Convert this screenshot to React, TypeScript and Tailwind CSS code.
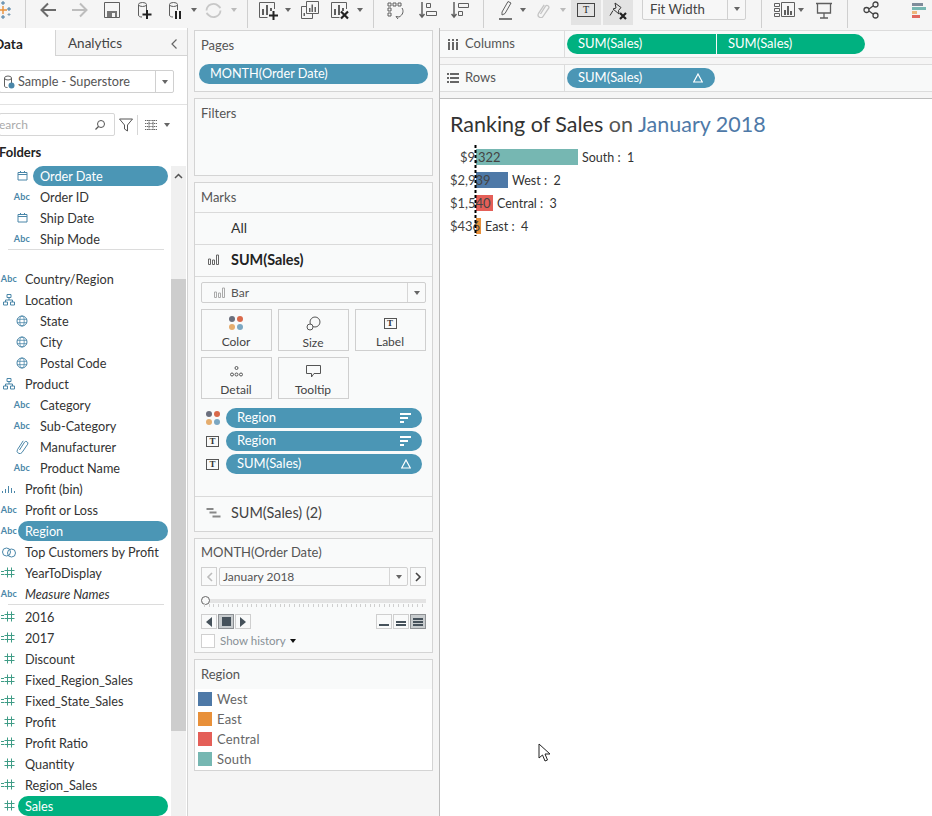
import React from "react";

const font = { fontFamily: '"Lato", "Open Sans", sans-serif' };

function Svg({ w = 24, h = 24, children, className = "" }: { w?: number; h?: number; children: React.ReactNode; className?: string }) {
  return (
    <svg width={w} height={h} viewBox={`0 0 ${w} ${h}`} fill="none" className={`shrink-0 ${className}`}>
      {children}
    </svg>
  );
}

function Caret({ c = "#666", s = 3 }: { c?: string; s?: number }) {
  return <div className="w-0 h-0" style={{ borderLeft: `${s}px solid transparent`, borderRight: `${s}px solid transparent`, borderTop: `${s + 1}px solid ${c}` }} />;
}

function Sep() {
  return <div className="w-px h-[28px] bg-[#cfcfcf] self-start" />;
}

const D = "#5f5f5f";
const CLIP = "M3.500 11 8.500 3.200a1.900 1.900 0 0 1 3.200 2L6 13.500a2.700 2.700 0 0 1-4.600-2.800L7.200 1.800";

type Tool = { x: number; w: number; node: React.ReactNode };

const tools: Tool[] = [
  {
    x: -3, w: 14,
    node: (
      <Svg w={14} h={20}>
        <path d="M6 6v8M2 10h8" stroke="#e8903a" strokeWidth="1.400" />
        <path d="M6 1v4M4 3h4M12 7v4M10 9h4M6 15v4M4 17h4" stroke="#44799f" strokeWidth="1" />
        <path d="M12 13v3M10.500 14.500h3" stroke="#7f9fb5" />
      </Svg>
    ),
  },
  { x: 25, w: 1, node: <Sep /> },
  { x: 40, w: 16, node: <Svg w={16} h={16}><path d="M8 1.500 1.500 8 8 14.500M1.500 8H16" stroke="#6b6b6b" strokeWidth="2" /></Svg> },
  { x: 72, w: 16, node: <Svg w={16} h={16}><path d="M8 1.500 14.500 8 8 14.500M14.500 8H0" stroke="#bdbdbd" strokeWidth="2" /></Svg> },
  { x: 104, w: 16, node: <Svg w={16} h={16}><path d="M.5.500h15v15H.5z" stroke={D} /><path d="M3 15V9h10v6z" fill="#777" /><path d="M8 11h3v4H8z" fill="#f5f5f5" /></Svg> },
  {
    x: 137, w: 15,
    node: (
      <Svg w={15} h={19}>
        <ellipse cx="5.500" cy="3.500" rx="4" ry="2" stroke={D} />
        <path d="M1.500 4v10c0 1.500 1.500 2 3.500 2M9.500 4v5" stroke={D} />
        <path d="M10 9v9M5.500 13.500h9" stroke="#222" strokeWidth="2" />
      </Svg>
    ),
  },
  {
    x: 168, w: 14,
    node: (
      <Svg w={14} h={19}>
        <ellipse cx="5.500" cy="3.500" rx="4" ry="2" stroke={D} />
        <path d="M1.500 4v10c0 1.500 1.500 2 3.500 2M9.500 4v5" stroke={D} />
        <path d="M7 10h2v8H7zM11 10h2v8h-2z" fill="#222" />
      </Svg>
    ),
  },
  { x: 191, w: 6, node: <Caret /> },
  { x: 205, w: 17, node: <Svg w={17} h={17}><path d="M1.500 8.500a7 7 0 0 1 12-4.500l2 2M15.500 8.500a7 7 0 0 1-12 4.500l-2-2" stroke="#c8c8c8" strokeWidth="1.800" /></Svg> },
  { x: 231, w: 6, node: <Caret c="#bbb" /> },
  { x: 247, w: 1, node: <Sep /> },
  {
    x: 259, w: 20,
    node: (
      <Svg w={20} h={19}>
        <path d="M15.500 8V1.500H.5v15h8" stroke={D} />
        <path d="M3 8h2v6H3zM7 4h2v10H7zM11 7h2v3h-2z" fill={D} />
        <path d="M14.500 10v9M10 14.500h9" stroke="#222" strokeWidth="2" />
      </Svg>
    ),
  },
  { x: 285, w: 6, node: <Caret /> },
  {
    x: 301, w: 18,
    node: (
      <Svg w={18} h={18}>
        <path d="M5.500 5.500h-5v12h11v-5" stroke={D} />
        <path d="M5.500.5h12v12h-12z" stroke={D} />
        <path d="M8 7h1.500v4H8zM10.500 3.500H12V11h-1.500zM13.500 6H15v5h-1.500zM2.500 12H4v3H2.500z" fill={D} />
      </Svg>
    ),
  },
  {
    x: 331, w: 19,
    node: (
      <Svg w={19} h={19}>
        <path d="M15.500 8V1.500H.5v15h8" stroke={D} />
        <path d="M3 8h2v6H3zM7 4h2v10H7zM11 7h2v3h-2z" fill={D} />
        <path d="M10 10.500l7 7M17 10.500l-7 7" stroke="#222" strokeWidth="2.200" />
      </Svg>
    ),
  },
  { x: 357, w: 6, node: <Caret /> },
  { x: 373, w: 1, node: <Sep /> },
  {
    x: 387, w: 17,
    node: (
      <Svg w={17} h={18}>
        <path d="M1 2h3v3H1zM6 2h3v3H6zM11 2h3v3h-3zM1 7h3v3H1zM1 12h3v3H1z" stroke={D} />
        <path d="M15 7c2 3 1 7-3 9l-3-.5M11 18l-2-2.500" stroke={D} />
      </Svg>
    ),
  },
  {
    x: 419, w: 18,
    node: (
      <Svg w={18} h={18}>
        <path d="M3 1v15M.5 13 3 16l2.500-3" stroke={D} strokeWidth="1.500" />
        <path d="M7.500 2.500h4v4h-4zM7.500 10.500h10v4h-10z" stroke={D} />
      </Svg>
    ),
  },
  {
    x: 451, w: 18,
    node: (
      <Svg w={18} h={18}>
        <path d="M3 1v15M.5 13 3 16l2.500-3" stroke={D} strokeWidth="1.500" />
        <path d="M7.500 2.500h10v4h-10zM7.500 10.500h4v4h-4z" stroke={D} />
      </Svg>
    ),
  },
  { x: 483, w: 1, node: <Sep /> },
  {
    x: 499, w: 13,
    node: (
      <Svg w={13} h={20}>
        <path d="M3 12 9 1.500l3 1.500-6 10.500-3 1.500z" stroke={D} />
        <path d="M0 19h13" stroke="#777" strokeWidth="2" />
      </Svg>
    ),
  },
  { x: 520, w: 6, node: <Caret /> },
  {
    x: 537, w: 13,
    node: (
      <Svg w={13} h={15}>
        <path d={CLIP} stroke="#c4c4c4" strokeWidth="1.300" />
      </Svg>
    ),
  },
  { x: 560, w: 6, node: <Caret c="#bbb" /> },
  {
    x: 571, w: 30,
    node: (
      <div className="w-[30px] h-[25px] self-start pb-[5px] bg-[#e3e3e3] flex items-center justify-center">
        <div className="w-[18px] h-[14px] border border-[#444] flex items-center justify-center text-[10px] text-[#222] leading-none" style={{ fontFamily: '"Liberation Serif", serif' }}>T</div>
      </div>
    ),
  },
  {
    x: 603, w: 30,
    node: (
      <div className="w-[30px] h-[25px] self-start pb-[3px] bg-[#e3e3e3] flex items-center justify-center">
        <Svg w={19} h={19}>
          <path d="M6 1l6 4.500-2.500 3 .5 3.500-6-5 3-1zM4 8.500l-3 5" stroke="#333" />
          <path d="M11 11l6 6M17 11l-6 6" stroke="#222" strokeWidth="2.200" />
        </Svg>
      </div>
    ),
  },
  {
    x: 642, w: 104,
    node: (
      <div className="w-[104px] h-[22px] self-start -mt-[2px] border border-[#d0d0d0] rounded-[2px] flex items-center pl-[7px] text-[13.200px] text-[#444] bg-[#f7f7f7]">
        <span className="flex-1 pt-[2px]">Fit Width</span>
        <div className="w-[18px] h-full border-l border-[#d0d0d0] flex items-center justify-center"><Caret /></div>
      </div>
    ),
  },
  { x: 761, w: 1, node: <Sep /> },
  {
    x: 774, w: 21,
    node: (
      <Svg w={21} h={16}>
        <path d="M.5 1.500h5v3h-5zM.5 6.500h5v3h-5zM.5 11.500h5v3h-5z" stroke={D} />
        <path d="M7.500.5h13v14h-13z" stroke={D} />
        <path d="M10 8h2v5h-2zM13 4h2v9h-2zM16 9h2v4h-2z" fill={D} />
      </Svg>
    ),
  },
  { x: 798, w: 6, node: <Caret /> },
  {
    x: 815, w: 18,
    node: (
      <Svg w={18} h={18}>
        <path d="M1 2.500h16M2.500 3v9h13V3M9 12v5M5 17h8" stroke={D} strokeWidth="1.300" />
      </Svg>
    ),
  },
  { x: 847, w: 1, node: <Sep /> },
  {
    x: 863, w: 16,
    node: (
      <Svg w={16} h={18}>
        <circle cx="3.500" cy="9" r="2.500" stroke="#444" strokeWidth="1.300" />
        <circle cx="12.500" cy="3.500" r="2.500" stroke="#444" strokeWidth="1.300" />
        <circle cx="12.500" cy="14.500" r="2.500" stroke="#444" strokeWidth="1.300" />
        <path d="M6 8l4-3M6 10l4 3" stroke="#444" strokeWidth="1.300" />
      </Svg>
    ),
  },
  {
    x: 912, w: 14,
    node: (
      <div className="w-[14px] flex flex-col gap-px">
        <div className="h-[3px] w-[11px] bg-[#7f8c9a]" />
        <div className="h-[3px] w-[14px] bg-[#76b7b2]" />
        <div className="h-[3px] w-[5px] bg-[#edb77d]" />
        <div className="h-[3px] w-[8px] bg-[#e1675f]" />
      </div>
    ),
  },
];

function Toolbar() {
  let edge = 0;
  return (
    <div className="h-[28px] bg-[#f5f5f5] shrink-0 text-[#555] overflow-hidden">
      <div className="h-[20px] flex items-center">
        {tools.map((t) => {
          const ml = t.x - edge;
          edge = t.x + t.w;
          return (
            <div key={t.x} className="shrink-0 h-full flex items-center justify-center" style={{ marginLeft: ml, width: t.w }}>
              {t.node}
            </div>
          );
        })}
      </div>
    </div>
  );
}

const dimIcon = "#4a86a8";
const meaIcon = "#3f9c86";

function AbcIcon({ c = dimIcon }: { c?: string }) {
  return <span className="text-[9px] font-bold leading-none tracking-[0.2px]" style={{ color: c }}>Abc</span>;
}

function CalIcon() {
  return (
    <Svg w={11} h={11}>
      <path d="M1 2.500h9v7.500H1zM1 4.500h9M3.500 1v2M7.500 1v2" stroke={dimIcon} />
    </Svg>
  );
}

function GlobeIcon() {
  return (
    <Svg w={12} h={12}>
      <circle cx="6" cy="6" r="5" stroke={dimIcon} />
      <ellipse cx="6" cy="6" rx="2.200" ry="5" stroke={dimIcon} strokeWidth=".8" />
      <path d="M1 4.300h10M1 7.700h10" stroke={dimIcon} strokeWidth=".8" />
    </Svg>
  );
}

function TreeIcon() {
  return (
    <Svg w={12} h={12}>
      <path d="M4 .5h4v3H4zM.5 8h4v3h-4zM7.500 8h4v3h-4zM6 3.500V6M2.500 8V6h7v2" stroke={dimIcon} />
    </Svg>
  );
}

function ClipIcon() {
  return (
    <Svg w={13} h={15}>
      <path d={CLIP} stroke={dimIcon} />
    </Svg>
  );
}

function BinIcon() {
  return (
    <Svg w={14} h={9}>
      <path d="M.5 7v2M3.500 5v4M6.500 2v7M9.500 4v5M12.500 7v2" stroke={dimIcon} />
    </Svg>
  );
}

function SetIcon() {
  return (
    <Svg w={14} h={12}>
      <circle cx="4.500" cy="6" r="4" stroke={dimIcon} />
      <circle cx="9.500" cy="7" r="4" stroke={dimIcon} />
    </Svg>
  );
}

function HashIcon({ eq = false }: { eq?: boolean }) {
  return (
    <div className="flex items-center">
      {eq && <span className="block w-[3px] h-[4px] border-y border-[#3f9c86] -ml-[3px]" />}
      <Svg w={11} h={11}>
        <path d="M3.500.5v10M7.500.5v10M.5 3.500h10M.5 7.500h10" stroke={meaIcon} />
      </Svg>
    </div>
  );
}

type Row = { t: string; icon: React.ReactNode; nest?: boolean; pill?: string; italic?: boolean; rule?: boolean; gap?: number };

const rows: Row[] = [
  { t: "Order Date", icon: <CalIcon />, nest: true, pill: "#4b96b5" },
  { t: "Order ID", icon: <AbcIcon />, nest: true },
  { t: "Ship Date", icon: <CalIcon />, nest: true },
  { t: "Ship Mode", icon: <AbcIcon />, nest: true, rule: true },
  { t: "Country/Region", icon: <AbcIcon />, gap: 18 },
  { t: "Location", icon: <TreeIcon /> },
  { t: "State", icon: <GlobeIcon />, nest: true },
  { t: "City", icon: <GlobeIcon />, nest: true },
  { t: "Postal Code", icon: <GlobeIcon />, nest: true },
  { t: "Product", icon: <TreeIcon /> },
  { t: "Category", icon: <AbcIcon />, nest: true },
  { t: "Sub-Category", icon: <AbcIcon />, nest: true },
  { t: "Manufacturer", icon: <ClipIcon />, nest: true },
  { t: "Product Name", icon: <AbcIcon />, nest: true },
  { t: "Profit (bin)", icon: <BinIcon /> },
  { t: "Profit or Loss", icon: <AbcIcon /> },
  { t: "Region", icon: <AbcIcon />, pill: "#4b96b5" },
  { t: "Top Customers by Profit", icon: <SetIcon /> },
  { t: "YearToDisplay", icon: <HashIcon eq /> },
  { t: "Measure Names", icon: <AbcIcon />, italic: true, rule: true },
  { t: "2016", icon: <HashIcon eq />, gap: 1 },
  { t: "2017", icon: <HashIcon eq /> },
  { t: "Discount", icon: <HashIcon /> },
  { t: "Fixed_Region_Sales", icon: <HashIcon eq /> },
  { t: "Fixed_State_Sales", icon: <HashIcon eq /> },
  { t: "Profit", icon: <HashIcon /> },
  { t: "Profit Ratio", icon: <HashIcon eq /> },
  { t: "Quantity", icon: <HashIcon /> },
  { t: "Region_Sales", icon: <HashIcon eq /> },
  { t: "Sales", icon: <HashIcon />, pill: "#00b180" },
];

function FieldRow({ r }: { r: Row }) {
  return (
    <>
      <div className="h-[21px] flex items-center shrink-0 w-[168px]" style={{ marginTop: r.gap ?? 0 }}>
        <div className={`flex items-center justify-center shrink-0 ${r.nest ? "w-[33px] pl-[11px]" : "w-[18px]"}`}>{r.icon}</div>
        <div
          className={`flex-1 h-[20px] flex items-center pl-[7px] pt-[2px] rounded-full text-[12.700px] ${r.italic ? "italic" : ""} ${r.pill ? "text-white" : "text-[#333]"}`}
          style={r.pill ? { backgroundColor: r.pill } : undefined}
        >
          {r.t}
        </div>
      </div>
      {r.rule && <div className="h-px bg-[#dcdcdc] ml-[8px] w-[156px] shrink-0" />}
    </>
  );
}

function Sidebar() {
  return (
    <div className="w-[188px] shrink-0 bg-white flex flex-col border-r border-[#d4d4d4] overflow-hidden">
      <div className="h-[26px] mt-[2px] flex shrink-0 text-[13.500px]">
        <div className="w-[61px] font-bold text-[#222] flex items-center -ml-[6px] pt-[2px] shrink-0"><span>Data</span></div>
        <div className="flex-1 bg-[#f5f5f5] border-l border-b border-[#d4d4d4] flex items-center pl-[12px] pt-[2px] text-[#444] justify-between pr-[9px]">
          <span>Analytics</span>
          <Svg w={8} h={12}><path d="M6.500 1.500 2 6l4.500 4.500" stroke="#666" strokeWidth="1.200" /></Svg>
        </div>
      </div>
      <div className="h-[49px] border-b border-[#e2e2e2] flex items-center shrink-0 pt-[3px]">
        <div className="w-[175px] h-[23px] border border-[#d0d0d0] rounded-[2px] flex items-center -ml-px shrink-0">
          <div className="w-[18px] flex justify-center">
            <Svg w={12} h={14}>
              <ellipse cx="5" cy="3" rx="3.500" ry="2" stroke={D} />
              <path d="M1.500 3v8c0 1 1 1.500 3 1.500M8.500 3v5" stroke={D} />
              <circle cx="8.500" cy="10.500" r="3" fill="#4a86a8" />
            </Svg>
          </div>
          <span className="flex-1 text-[12.700px] text-[#555]">Sample - Superstore</span>
          <div className="w-[18px] h-full border-l border-[#d0d0d0] flex items-center justify-center"><Caret /></div>
        </div>
      </div>
      <div className="h-[23px] mt-[8px] flex items-center shrink-0">
        <div className="w-[116px] h-[23px] border border-[#d6d6d6] rounded-[2px] flex items-center justify-between pr-[8px] text-[12px] text-[#aaa] -ml-[1px] overflow-hidden shrink-0">
          <span className="-ml-[1px]">earch</span>
          <Svg w={12} h={12}><circle cx="7" cy="5" r="3.500" stroke="#555" /><path d="M4.500 7.500 1.500 10.500" stroke="#555" strokeWidth="1.300" /></Svg>
        </div>
        <div className="w-[22px] flex justify-center">
          <Svg w={14} h={14}><path d="M.5 1h13L8.500 7v6l-3-2V7z" stroke="#555" /></Svg>
        </div>
        <div className="w-px h-[20px] bg-[#d6d6d6]" />
        <div className="w-[26px] flex justify-center">
          <Svg w={12} h={10}><path d="M0 .5h12M0 3.500h12M0 6.500h12M0 9.500h12M4 0v10M8 0v10" stroke="#666" strokeDasharray="1.200 .6" /></Svg>
        </div>
        <Caret />
      </div>
      <div className="h-[19px] mt-[7px] text-[13px] font-bold text-[#222] flex items-center -ml-[1px] shrink-0">Folders</div>
      <div className="flex-1 flex min-h-0">
        <div className="w-[171px] pt-[3px] flex flex-col shrink-0 overflow-hidden">
          {rows.map((r) => (
            <FieldRow key={r.t} r={r} />
          ))}
        </div>
        <div className="w-[15px] mt-[4px] shrink-0 bg-[#f0f0f0] flex flex-col">
          <div className="h-[113px] flex justify-center pt-[7px]">
            <Svg w={9} h={6}><path d="M1 5l3.500-3.500L8 5" stroke="#555" strokeWidth="1.500" /></Svg>
          </div>
          <div className="h-[452px] bg-[#cdcdcd]" />
        </div>
      </div>
    </div>
  );
}

function Card({ title, className = "", children }: { title?: string; className?: string; children?: React.ReactNode }) {
  return (
    <div className={`border border-[#d4d4d4] bg-[#f9fafa] shrink-0 ${className}`}>
      {title && <div className="h-[30px] pl-[6px] flex items-center text-[13px] text-[#555]">{title}</div>}
      {children}
    </div>
  );
}

function Pill({ t, w, color = "#4b96b5", right, size = "text-[13px]", round = "rounded-full" }: { t: string; w?: number | string; color?: string; right?: React.ReactNode; size?: string; round?: string }) {
  return (
    <div className={`h-[20px] flex items-center justify-between pl-[11px] pr-[11px] text-white shrink-0 ${round} ${size}`} style={{ backgroundColor: color, width: w }}>
      <span>{t}</span>
      {right}
    </div>
  );
}

function SortIcon() {
  return (
    <div className="flex flex-col gap-[2px]">
      <div className="w-[11px] h-[2px] bg-white" />
      <div className="w-[8px] h-[2px] bg-white" />
      <div className="w-[4px] h-[2px] bg-white" />
    </div>
  );
}

function Delta() {
  return <Svg w={10} h={10}><path d="M5 1 9.300 9H.7z" stroke="#fff" strokeWidth="1.200" /></Svg>;
}

function BarMini({ c = "#666" }: { c?: string }) {
  return (
    <Svg w={12} h={11}>
      <path d="M.5 5h2v5.500h-2zM4.500 6h2v4.500h-2zM8.500 1h2v9.500h-2z" stroke={c} />
    </Svg>
  );
}

function DotsFour() {
  const s = "w-[6px] h-[6px] rounded-full";
  return (
    <div className="grid grid-cols-2 gap-[2px]">
      <div className={`${s} bg-[#6b6f7d]`} />
      <div className={`${s} bg-[#d9694a]`} />
      <div className={`${s} bg-[#e5ad6e]`} />
      <div className={`${s} bg-[#7ba7c2]`} />
    </div>
  );
}

function TBox() {
  return (
    <div className="w-[13px] h-[11px] border border-[#555] flex items-center justify-center text-[9px] font-bold text-[#333] leading-none" style={{ fontFamily: '"Liberation Serif", serif' }}>T</div>
  );
}

function MarkBtn({ label, icon }: { label: string; icon: React.ReactNode }) {
  return (
    <div className="h-[42px] border border-[#cfcfcf] bg-[#f9fafa] flex flex-col items-center pt-[6px] pr-[1px] text-[12px] text-[#444]">
      <div className="h-[15px] flex items-center justify-center">{icon}</div>
      <div className="leading-[17px] mt-[3px]">{label}</div>
    </div>
  );
}

function MarkPillRow({ icon, t, right }: { icon: React.ReactNode; t: string; right: React.ReactNode }) {
  return (
    <div className="flex items-center h-[20px] mb-[3px]">
      <div className="w-[25px] flex justify-center shrink-0 pr-[2px]">{icon}</div>
      <Pill t={t} w={196} right={right} />
    </div>
  );
}

function Marks() {
  return (
    <Card className="mt-[6px] h-[350px]">
      <div className="h-[30px] pl-[6px] flex items-center text-[13px] text-[#555] border-b border-[#dadada]">Marks</div>
      <div className="h-[32px] pl-[36px] pb-[2px] flex items-center text-[14px] text-[#333] border-b border-[#dadada]">All</div>
      <div className="h-[32px] pb-[2px] flex items-center text-[14.400px] font-bold text-[#222] border-b border-[#dadada]">
        <div className="w-[36px] flex justify-center pl-[2px]"><BarMini /></div>
        SUM(Sales)
      </div>
      <div className="px-[6px] pt-[5px]">
        <div className="h-[21px] border border-[#cfcfcf] rounded-[2px] flex items-center text-[12px] text-[#555]">
          <div className="w-[29px] flex justify-end pr-[5px]"><BarMini c="#aaa" /></div>
          <span className="flex-1">Bar</span>
          <div className="w-[18px] h-full border-l border-[#d6d6d6] flex items-center justify-center"><Caret /></div>
        </div>
        <div className="grid grid-cols-3 gap-[6px] mt-[6px]">
          <MarkBtn label="Color" icon={<DotsFour />} />
          <MarkBtn
            label="Size"
            icon={
              <Svg w={15} h={15}>
                <circle cx="9" cy="6" r="5" stroke="#555" />
                <circle cx="4" cy="11" r="3" stroke="#555" fill="#f9fafa" />
              </Svg>
            }
          />
          <MarkBtn label="Label" icon={<TBox />} />
          <MarkBtn
            label="Detail"
            icon={
              <Svg w={13} h={11}>
                <circle cx="6.500" cy="2" r="1.500" stroke="#555" />
                <circle cx="2" cy="8.500" r="1.500" stroke="#555" />
                <circle cx="6.500" cy="8.500" r="1.500" stroke="#555" />
                <circle cx="11" cy="8.500" r="1.500" stroke="#555" />
              </Svg>
            }
          />
          <MarkBtn
            label="Tooltip"
            icon={
              <Svg w={15} h={13}>
                <path d="M.5.5h14v8H8l-2.500 3.500V8.500h-5z" stroke="#555" />
              </Svg>
            }
          />
        </div>
      </div>
      <div className="px-[6px] mt-[9px]">
        <MarkPillRow icon={<DotsFour />} t="Region" right={<SortIcon />} />
        <MarkPillRow icon={<TBox />} t="Region" right={<SortIcon />} />
        <MarkPillRow icon={<TBox />} t="SUM(Sales)" right={<Delta />} />
      </div>
      <div className="mt-[22px] h-[32px] pt-[1px] border-t border-[#dadada] flex items-center text-[14.400px] text-[#444]">
        <div className="w-[36px] flex justify-center pl-[1px]">
          <Svg w={16} h={12}>
            <path d="M.5 2h7M3.500 5.500h7M6.500 9.500h8" stroke="#888" strokeWidth="2" />
          </Svg>
        </div>
        SUM(Sales) (2)
      </div>
    </Card>
  );
}

function SmallBtn({ active, children }: { active?: boolean; children: React.ReactNode }) {
  return (
    <div className={`w-[16px] h-[15px] border flex items-center justify-center ${active ? "bg-[#c8ccce] border-[#8e9194]" : "bg-[#f9fafa] border-[#cfcfcf]"}`}>
      {children}
    </div>
  );
}

function PagesControl() {
  const ticks = Array.from({ length: 47 });
  const line = "w-[10px] h-[2px] bg-[#46525b]";
  return (
    <Card className="mt-[6px] h-[115px]">
      <div className="h-[27px] pl-[6px] flex items-center text-[13px] text-[#555]">MONTH(Order Date)</div>
      <div className="px-[6px]">
        <div className="flex items-center h-[19px] gap-[2px] mt-[1px] text-[12px] text-[#555]">
          <div className="w-[16px] h-[19px] border border-[#d0d0d0] flex items-center justify-center">
            <Svg w={7} h={10}><path d="M6 1 2 5l4 4" stroke="#bbb" strokeWidth="1.600" /></Svg>
          </div>
          <div className="flex-1 h-[19px] border border-[#d0d0d0] rounded-[2px] flex items-center pl-[3px]">
            <span className="flex-1">January 2018</span>
            <div className="w-[18px] h-full border-l border-[#d6d6d6] flex items-center justify-center"><Caret /></div>
          </div>
          <div className="w-[16px] h-[19px] border border-[#d0d0d0] flex items-center justify-center">
            <Svg w={7} h={10}><path d="M1 1l4 4-4 4" stroke="#444" strokeWidth="1.600" /></Svg>
          </div>
        </div>
        <div className="relative h-[15px] mt-[10px]">
          <div className="absolute left-0 right-0 top-[3px] h-[4px] bg-[#e4e4e4]" />
          <div className="absolute left-0 top-0 w-[9px] h-[9px] rounded-full border border-[#666] bg-[#f9fafa]" />
          <div className="absolute left-[3px] right-[3px] top-[8px] flex justify-between">
            {ticks.map((_, i) => (
              <div key={i} className="w-px h-[3px] bg-[#cfcfcf]" />
            ))}
          </div>
        </div>
        <div className="flex items-center justify-between mt-[3px]">
          <div className="flex gap-[1px]">
            <SmallBtn><div className="w-0 h-0 border-y-[5px] border-y-transparent border-r-[6px] border-r-[#46525b]" /></SmallBtn>
            <SmallBtn active><div className="w-[9px] h-[9px] bg-[#46525b]" /></SmallBtn>
            <SmallBtn><div className="w-0 h-0 border-y-[5px] border-y-transparent border-l-[6px] border-l-[#46525b]" /></SmallBtn>
          </div>
          <div className="flex gap-[1px]">
            <SmallBtn><div className={`${line} mt-[6px]`} /></SmallBtn>
            <SmallBtn><div className="flex flex-col gap-[1px] mt-[3px]"><div className={line} /><div className={line} /></div></SmallBtn>
            <SmallBtn active><div className="flex flex-col gap-[1px]"><div className={line} /><div className={line} /><div className={line} /></div></SmallBtn>
          </div>
        </div>
        <div className="flex items-center h-[14px] mt-[5px] text-[11.500px] text-[#889096]">
          <div className="w-[14px] h-[14px] border border-[#d0d0d0] bg-white mr-[5px]" />
          Show history
          <div className="ml-[4px]"><Caret c="#111" /></div>
        </div>
      </div>
    </Card>
  );
}

function Legend() {
  const items = [
    ["West", "#4e79a7"],
    ["East", "#e8903a"],
    ["Central", "#e45f58"],
    ["South", "#76b7b2"],
  ];
  return (
    <Card className="mt-[6px] h-[112px] !bg-white">
      <div className="h-[29px] pl-[6px] flex items-center text-[13px] text-[#555] bg-[#f9fafa]">Region</div>
      <div className="flex flex-col">
        {items.map(([t, c]) => (
          <div key={t} className="h-[20px] flex items-center pl-[3px] text-[13px] text-[#666] tracking-[0.2px]">
            <div className="w-[14px] h-[14px] mr-[5px]" style={{ backgroundColor: c }} />
            <span className="pt-[2px]">{t}</span>
          </div>
        ))}
      </div>
    </Card>
  );
}

function MiddleColumn() {
  return (
    <div className="w-[252px] shrink-0 bg-[#f5f5f5] pl-[6px] pt-[2px] border-r border-[#bdbdbd] overflow-hidden">
      <div className="w-[239px]">
        <Card title="Pages" className="h-[62px]">
          <div className="px-[4px] mt-[3px]">
            <Pill t="MONTH(Order Date)" w={229} size="text-[12.700px]" />
          </div>
        </Card>
        <Card title="Filters" className="h-[78px] mt-[6px]" />
        <Marks />
        <PagesControl />
        <Legend />
      </div>
    </div>
  );
}

function Shelf({ label, icon, children }: { label: string; icon: React.ReactNode; children: React.ReactNode }) {
  return (
    <div className="h-[28px] bg-[#f8f9f9] border-y border-[#dcdcdc] flex items-center shrink-0">
      <div className="w-[125px] h-full border-r border-[#dcdcdc] flex items-center text-[13px] text-[#555] shrink-0">
        <div className="w-[25px] flex justify-center pl-[1px]">{icon}</div>
        {label}
      </div>
      <div className="flex pl-[2px]">{children}</div>
    </div>
  );
}

function Chart() {
  const rowsData = [
    { v: "$9,322", x: 460, y: 150, w: 102, c: "#76b7b2", l: "South :  1" },
    { v: "$2,939", x: 450, y: 173, w: 32, c: "#4e79a7", l: "West :  2" },
    { v: "$1,540", x: 450, y: 196, w: 17, c: "#e45f58", l: "Central :  3" },
    { v: "$436", x: 450, y: 219, w: 5, c: "#e8903a", l: "East :  4" },
  ];
  return (
    <div className="flex-1 bg-white border-t border-[#bdbdbd] mt-[6px] min-h-0 relative">
      <div className="pl-[10px] pt-[11px] text-[21.500px] leading-[28px] text-[#333] whitespace-nowrap">
        Ranking of Sales <span className="text-[#555]">on</span> <span className="text-[#4e79a7]">January 2018</span>
      </div>
      <svg width={300} height={110} viewBox="440 140 300 110" className="block mt-[1px]" style={font}>
        {rowsData.map((r) => (
          <g key={r.v}>
            <rect x={476} y={r.y} width={r.w} height={16} fill={r.c} />
            <text x={r.x} y={r.y + 12.500} fontSize="13" fill="#444">{r.v}</text>
            <text x={476 + r.w + 4} y={r.y + 12.500} fontSize="12.500" fill="#333" style={{ whiteSpace: "pre" }}>{r.l}</text>
          </g>
        ))}
        <line x1={475.500} x2={475.500} y1={146} y2={237} stroke="#000" strokeWidth="2" strokeDasharray="3 2" />
      </svg>
      <div className="absolute left-[98px] top-[644px]">
        <Svg w={14} h={20}>
          <path d="M1 1v14l3.500-3 2.500 6 2.500-1-2.500-6h5z" fill="#fff" stroke="#222" />
        </Svg>
      </div>
    </div>
  );
}

function RightColumn() {
  return (
    <div className="flex-1 flex flex-col min-w-0 bg-[#f5f5f5] pt-[2px]">
      <Shelf
        label="Columns"
        icon={<Svg w={12} h={11}><path d="M1 0h2v2H1zM5 0h2v2H5zM9 0h2v2H9z" fill="#666" /><path d="M1 3h2v8H1zM5 3h2v8H5zM9 3h2v8H9z" fill="#666" /></Svg>}
      >
        <Pill t="SUM(Sales)" w={149} color="#00b180" round="rounded-l-full" />
        <div className="w-px" />
        <Pill t="SUM(Sales)" w={148} color="#00b180" round="rounded-r-full" />
      </Shelf>
      <div className="h-[6px] shrink-0" />
      <Shelf
        label="Rows"
        icon={<Svg w={12} h={10}><path d="M0 0h2v2H0zM0 4h2v2H0zM0 8h2v2H0zM3 0h9v2H3zM3 4h9v2H3zM3 8h9v2H3z" fill="#666" /></Svg>}
      >
        <Pill t="SUM(Sales)" w={148} right={<div className="mr-[1px]"><Delta /></div>} />
      </Shelf>
      <Chart />
    </div>
  );
}

export default function App() {
  return (
    <div className="w-[932px] h-[816px] overflow-hidden flex flex-col bg-[#f5f5f5]" style={font}>
      <Toolbar />
      <div className="flex-1 flex min-h-0">
        <Sidebar />
        <MiddleColumn />
        <RightColumn />
      </div>
    </div>
  );
}
